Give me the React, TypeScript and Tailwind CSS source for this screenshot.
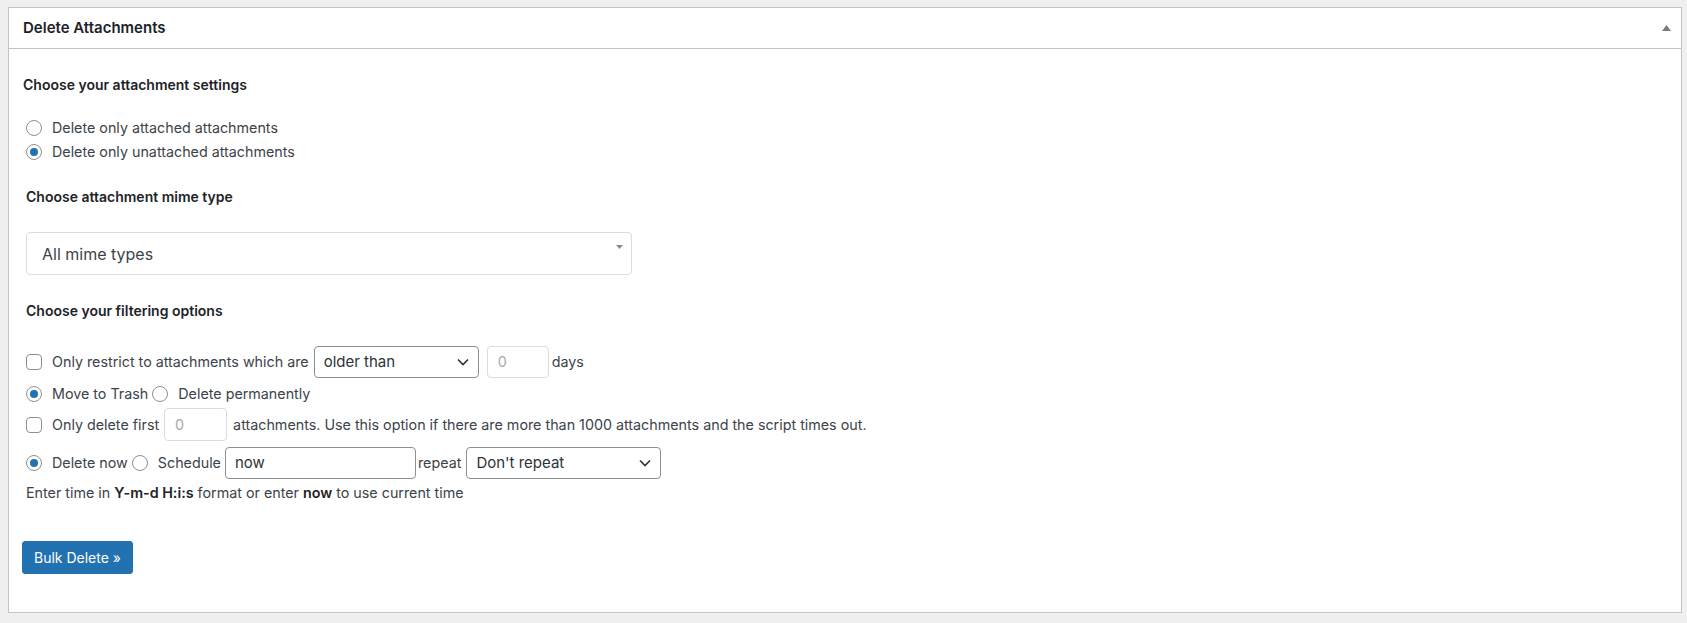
import React from 'react'

const font = { fontFamily: 'Inter, "Noto Sans", sans-serif' }

function Radio({ checked = false }: { checked?: boolean }) {
    return (
        <span className="w-4 h-4 shrink-0 rounded-full border border-[#8c8f94] bg-white flex items-center justify-center">
            {checked && <span className="w-2 h-2 rounded-full bg-[#2271b1]" />}
        </span>
    )
}

function Checkbox() {
    return <span className="w-4 h-4 shrink-0 rounded-[4px] border border-[#8c8f94] bg-white" />
}

function Chevron() {
    return (
        <svg width="12" height="8" viewBox="0 0 12 8" fill="none">
            <polyline points="1,1.5 6,6.5 11,1.5" stroke="#2c3338" strokeWidth="1.6" />
        </svg>
    )
}

function SelectBox({ label, width }: { label: string; width: string }) {
    return (
        <div className={`${width} h-full flex items-center justify-between border border-[#8c8f94] rounded-[4px] bg-white pl-[9px] pr-[9px] text-[15px] text-[#2c3338]`}>
            <span>{label}</span>
            <Chevron />
        </div>
    )
}

export default function App() {
    const [attached, setAttached] = React.useState<boolean>(false)
    return (
        <div className="min-h-[623px] bg-[#f0f0f1] pt-[7px] pl-[8px] pr-[5px]" style={font}>
            <div className="border border-[#c3c4c7] bg-white">
                <div className="h-[41px] border-b border-[#c3c4c7] flex items-center justify-between pl-[14px] pr-[10px]">
                    <span className="text-[15px] font-semibold text-[#1d2327]">Delete Attachments</span>
                    <svg width="9" height="6" viewBox="0 0 9 6">
                        <polygon points="4.5,0 9,6 0,6" fill="#787c82" />
                    </svg>
                </div>

                <div className="pl-[17px] pb-[38px] text-[14.3px] text-[#3c434a]">
                    <div className="mt-[26px] h-[20px] leading-[20px] -ml-[3px] text-[14px] font-semibold text-[#1d2327]">
                        Choose your attachment settings
                    </div>

                    <div className="mt-[21px] h-[24px] flex items-center gap-[10px] cursor-pointer" onClick={() => setAttached(true)}>
                        <Radio checked={attached} />
                        <span>Delete only attached attachments</span>
                    </div>
                    <div className="h-[24px] flex items-center gap-[10px] cursor-pointer" onClick={() => setAttached(false)}>
                        <Radio checked={!attached} />
                        <span>Delete only unattached attachments</span>
                    </div>

                    <div className="mt-[23px] h-[20px] leading-[20px] text-[14px] font-semibold text-[#1d2327]">
                        Choose attachment mime type
                    </div>

                    <div className="mt-[25px] w-[606px] h-[43px] border border-[#dcdcde] rounded-[4px] flex items-center justify-between pl-[15px] pr-[8px] text-[16px] text-[#3c434a]">
                        <span>All mime types</span>
                        <svg width="7" height="4" viewBox="0 0 7 4" className="-mt-[14px]">
                            <polygon points="0,0 7,0 3.5,4" fill="#888888" />
                        </svg>
                    </div>

                    <div className="mt-[26px] h-[20px] leading-[20px] text-[14px] font-semibold text-[#1d2327]">
                        Choose your filtering options
                    </div>

                    <div className="mt-[25px] h-[32px] flex items-center">
                        <Checkbox />
                        <span className="ml-[10px]">Only restrict to attachments which are</span>
                        <div className="ml-[5px] h-full">
                            <SelectBox label="older than" width="w-[165px]" />
                        </div>
                        <div className="ml-[8px] w-[62px] h-full border border-[#dcdcde] rounded-[4px] flex items-center pl-[10px] text-[#a7aaad]">
                            0
                        </div>
                        <span className="ml-[3px]">days</span>
                    </div>

                    <div className="mt-[4px] h-[23px] flex items-center">
                        <Radio checked />
                        <span className="ml-[10px]">Move to Trash</span>
                        <span className="ml-[4px]"><Radio /></span>
                        <span className="ml-[10px]">Delete permanently</span>
                    </div>

                    <div className="mt-[3px] h-[33px] flex items-center">
                        <Checkbox />
                        <span className="ml-[10px]">Only delete first</span>
                        <div className="ml-[5px] w-[63px] h-full border border-[#dcdcde] rounded-[4px] flex items-center pl-[10px] text-[#a7aaad]">
                            0
                        </div>
                        <span className="ml-[6px]">
                            attachments. Use this option if there are more than 1000 attachments and the script times out.
                        </span>
                    </div>

                    <div className="mt-[6px] h-[32px] flex items-center">
                        <Radio checked />
                        <span className="ml-[10px]">Delete now</span>
                        <span className="ml-[4px]"><Radio /></span>
                        <span className="ml-[10px]">Schedule</span>
                        <div className="ml-[4px] w-[191px] h-full border border-[#8c8f94] rounded-[4px] flex items-center pl-[9px] text-[15px] text-[#2c3338]">
                            now
                        </div>
                        <span className="ml-[2px]">repeat</span>
                        <div className="ml-[5px] h-full">
                            <SelectBox label="Don't repeat" width="w-[195px]" />
                        </div>
                    </div>

                    <div className="mt-[4px] h-[20px] leading-[20px]">
                        Enter time in <strong className="font-semibold text-[#1d2327]">Y-m-d H:i:s</strong> format or enter{' '}
                        <strong className="font-semibold text-[#1d2327]">now</strong> to use current time
                    </div>

                    <button className="mt-[38px] -ml-[4px] h-[33px] px-[11px] rounded-[3px] bg-[#2271b1] border border-[#2271b1] text-white text-[14px]">
                        Bulk Delete »
                    </button>
                </div>
            </div>
        </div>
    )
}
